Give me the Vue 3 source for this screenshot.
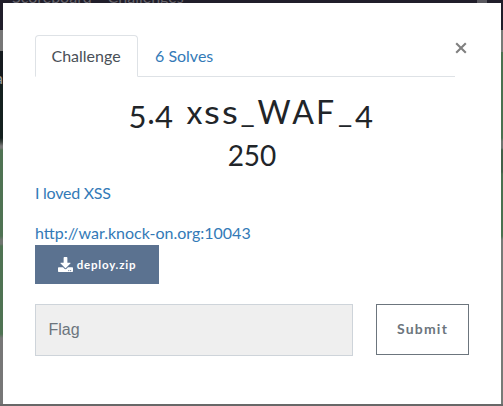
<script setup>
import { ref } from 'vue'

const tabs = ['Challenge', '6 Solves']
const active = ref('Challenge')
const flag = ref('')

const title = [
  { text: '5', kind: 'figure', w: 19 },
  { text: '.', kind: 'dot', w: 8 },
  { text: '4', kind: 'figure', w: 18 },
  { text: ' ', kind: 'gap', w: 13 },
  { text: 'x', kind: 'lower', w: 17 },
  { text: 's', kind: 'lower ess', w: 18 },
  { text: 's', kind: 'lower ess', w: 18 },
  { text: '_', kind: 'rule', w: 17 },
  { text: 'W', kind: 'upper', w: 36 },
  { text: 'A', kind: 'upper', w: 22 },
  { text: 'F', kind: 'upper', w: 22 },
  { text: '_', kind: 'rule', w: 18 },
  { text: '4', kind: 'figure', w: 20 },
]
</script>

<template>
  <div class="page">
    <div class="nav-peek"><span>Scoreboard</span><span>Challenges</span><i></i></div>
    <div class="left-peek"><span>a</span></div>
    <div class="right-peek"></div>
    <div class="bottom-peek">on</div>
    <main class="modal">
      <header class="head">
        <nav class="tabs">
          <a v-for="t in tabs" :key="t" class="tab" :class="{ active: active === t }" @click="active = t">{{ t }}</a>
        </nav>
        <button class="close" aria-label="Close">
          <svg width="12" height="12" viewBox="0 0 12 12"><path d="M1.2 1.2 10.8 10.8M10.8 1.2 1.2 10.8" /></svg>
        </button>
      </header>
      <h2 class="title"><span v-for="(p, i) in title" :key="i" :class="p.kind" :style="{ width: p.w + 'px' }">{{ p.text }}</span></h2>
      <h3 class="value">250</h3>
      <div class="desc">
        <p class="tight">I loved XSS</p>
        <p>http://war.knock-on.org:10043</p>
      </div>
      <a class="file">
        <svg width="15" height="15" viewBox="0 0 512 512"><path fill="currentColor" d="M216 0h80c13 0 24 11 24 24v168h88c18 0 27 21 14 34L270 378c-8 8-20 8-28 0L90 226c-13-13-4-34 14-34h88V24c0-13 11-24 24-24zm296 376v112c0 13-11 24-24 24H24c-13 0-24-11-24-24V376c0-13 11-24 24-24h147l49 49c20 20 52 20 72 0l49-49h147c13 0 24 11 24 24zM388 464c0-11-9-20-20-20s-20 9-20 20 9 20 20 20 20-9 20-20zm64 0c0-11-9-20-20-20s-20 9-20 20 9 20 20 20 20-9 20-20z" /></svg>
        <span>deploy.zip</span>
      </a>
      <form class="answer" @submit.prevent>
        <input v-model="flag" type="text" placeholder="Flag" />
        <button type="submit">Submit</button>
      </form>
    </main>
  </div>
</template>

<style>
body { margin: 0; overflow: hidden; }
</style>

<style scoped>
* { box-sizing: border-box; }
.page {
  position: relative;
  width: 503px;
  height: 406px;
  padding: 3px 5px 2px 3px;
  overflow: hidden;
  background: #6a6a6a;
  font: 16px/24px Lato, sans-serif;
  color: #212529;
}
.nav-peek, .left-peek, .right-peek, .bottom-peek { position: absolute; overflow: hidden; }
.nav-peek {
  left: 0; top: 0; width: 503px; height: 30px;
  display: flex;
  gap: 16px;
  padding-left: 12px;
  background: #201e2a;
  color: #66646c;
  line-height: 24px;
}
.nav-peek span { margin-top: -15px; }
.nav-peek i { position: absolute; left: 477px; top: 0; width: 10px; height: 3px; background: #5a5960; }
.left-peek {
  left: 0; top: 30px; width: 3px; height: 376px;
  background: linear-gradient(#777 0 21px, #151a1e 21px 54px, #14201f 54px 108px, #3b453f 112px, #777 116px 118px, #4f7353 120px 206px, #707570 210px 214px, #4f7353 216px 304px, #777 308px);
}
.left-peek span { position: absolute; left: -5px; top: 36px; color: #999; }
.right-peek {
  left: 501px; top: 30px; width: 2px; height: 376px;
  background: linear-gradient(#777b78 0 22px, #4a7150 22px 108px, #707570 111px 118px, #425f48 120px 142px, #4a7150 144px 206px, #777b78 210px);
}
.bottom-peek { left: 0; top: 404px; width: 503px; height: 2px; padding-left: 3px; background: #686868; color: #151515; font: 700 25px/10px Lato, sans-serif; }
.modal {
  position: relative;
  width: 498px;
  height: 401px;
  padding: 32px;
  background: #fff;
  display: flex;
  flex-direction: column;
}
.head { display: flex; height: 42px; }
.tabs { display: flex; width: 420px; border-bottom: 1px solid #dee2e6; }
.tab { height: 42px; padding: 8px 16px; border: 1px solid transparent; color: #337ab7; cursor: pointer; }
.tab.active { width: 103px; padding-left: 15.5px; color: #495057; background: #fff; border-color: #dee2e6 #dee2e6 #fff; border-radius: 4px 4px 0 0; }
.close { width: 12px; height: 12px; margin: 7px 0 0; padding: 0; border: 0; background: none; display: flex; }
.close path { stroke: #808080; stroke-width: 2.1; fill: none; }
.title { display: flex; justify-content: center; height: 38px; margin: 16px 0 0; padding-right: 2px; font-weight: 400; font-size: 32px; line-height: 38px; white-space: pre; }
.title span { display: flex; justify-content: center; }
.title .figure { padding-top: 4px; font-size: 31px; }
.title .ess { transform: scaleX(1.14); }
.title .rule { font-size: 31px; line-height: 36px; }
.value { margin: 7px 0 0; font-weight: 400; font-size: 28px; line-height: 34px; text-align: center; }
.desc { margin-top: 9px; height: 64px; color: #337ab7; }
.desc p { margin: 0 0 16px; }
.tight { letter-spacing: -0.25px; }
.file {
  display: flex;
  align-items: center;
  justify-content: center;
  gap: 4px;
  width: 124px;
  height: 39px;
  background: #5b7290;
  color: #fff;
  font-size: 11.5px;
  font-weight: 700;
  letter-spacing: 0.8px;
}
.answer { display: flex; justify-content: space-between; align-items: flex-start; margin-top: 20px; }
.answer input { width: 318px; height: 52px; padding: 0 12px 1px 12.5px; border: 1px solid #ced4da; border-radius: 0; background: #efefef; font: 16px "Liberation Sans", sans-serif; }
.answer input::placeholder { color: #6c757d; opacity: 1; }
.answer button { width: 93px; height: 51px; padding: 0 0 2px; border: 1px solid #6c757d; background: #fff; color: #6c757d; font: 700 14px Lato, sans-serif; letter-spacing: 1.2px; }
</style>
